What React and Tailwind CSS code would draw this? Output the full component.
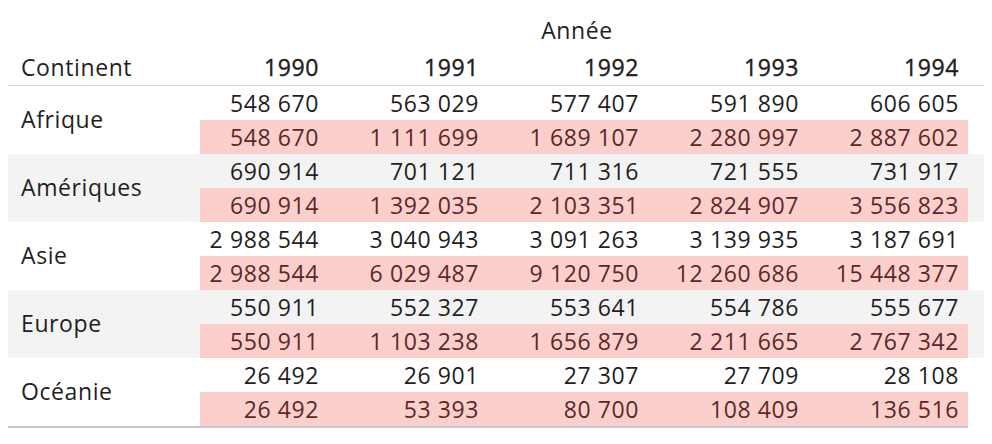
import React from 'react';

const years = ['1990', '1991', '1992', '1993', '1994'];

const rows = [
  {
    name: 'Afrique',
    values: ['548 670', '563 029', '577 407', '591 890', '606 605'],
    totals: ['548 670', '1 111 699', '1 689 107', '2 280 997', '2 887 602'],
  },
  {
    name: 'Amériques',
    values: ['690 914', '701 121', '711 316', '721 555', '731 917'],
    totals: ['690 914', '1 392 035', '2 103 351', '2 824 907', '3 556 823'],
  },
  {
    name: 'Asie',
    values: ['2 988 544', '3 040 943', '3 091 263', '3 139 935', '3 187 691'],
    totals: ['2 988 544', '6 029 487', '9 120 750', '12 260 686', '15 448 377'],
  },
  {
    name: 'Europe',
    values: ['550 911', '552 327', '553 641', '554 786', '555 677'],
    totals: ['550 911', '1 103 238', '1 656 879', '2 211 665', '2 767 342'],
  },
  {
    name: 'Océanie',
    values: ['26 492', '26 901', '27 307', '27 709', '28 108'],
    totals: ['26 492', '53 393', '80 700', '108 409', '136 516'],
  },
];

const cols = 'grid grid-cols-[192px_128px_160px_160px_160px_160px]';

const ContinentGroup = ({ row, striped }) => (
  <div className={`${cols} ${striped ? 'bg-[#f3f3f3]' : 'bg-white'}`}>
    <div className="row-span-2 flex items-center pl-[13px] pb-[2px] text-[#1f1f1f]">
      {row.name}
    </div>
    {row.values.map((v, i) => (
      <div key={'v' + i} className="h-[34px] flex items-center justify-end pr-[9px] text-[#1f1f1f]">
        {v}
      </div>
    ))}
    {row.totals.map((v, i) => (
      <div key={'t' + i} className="h-[34px] flex items-center justify-end pr-[9px] bg-[#fbd0cc] text-[#5e2727]">
        {v}
      </div>
    ))}
  </div>
);

export default function App() {
  return (
    <div
      className="w-[992px] h-[444px] bg-white px-2 text-[23px] leading-none tracking-[0.6px]"
      style={{ fontFamily: '"Open Sans", "Liberation Sans", sans-serif' }}
    >
      <div className={`${cols} h-[50px]`}>
        <div />
        <div className="col-span-5 flex items-center justify-center pt-[10px] pr-[14px] text-[#1f1f1f]">
          Année
        </div>
      </div>
      <div className={`${cols} h-[36px] border-b border-[#d6d6d6]`}>
        <div className="flex items-center pl-[13px] pb-[1px] text-[#1f1f1f]">Continent</div>
        {years.map((y) => (
          <div
            key={y}
            className="flex items-center justify-end pr-[9px] pb-[1px] text-[#1f1f1f] [-webkit-text-stroke:0.4px_#1f1f1f]"
          >
            {y}
          </div>
        ))}
      </div>
      {rows.map((row, i) => (
        <ContinentGroup key={row.name} row={row} striped={i % 2 === 1} />
      ))}
      <div className="w-[960px] h-[2px] bg-[#c9c9c9]" />
    </div>
  );
}
